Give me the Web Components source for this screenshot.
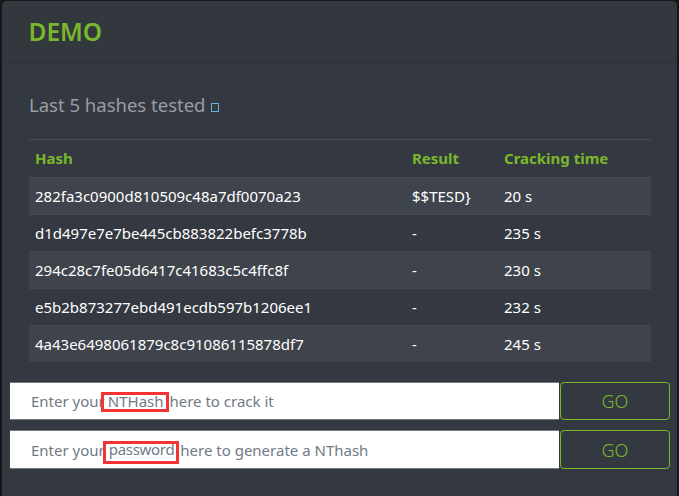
<!DOCTYPE html>
<html><head><meta charset="utf-8">
<style>
html,body{margin:0;padding:0;background:#15171a;height:100%;overflow:hidden}
body{font-family:"Noto Sans","Open Sans",sans-serif}
</style></head><body>
<demo-card>
  <span slot="title">DEMO</span>
  <span slot="sub">Last 5 hashes tested</span>
  <hash-table>
    <hash-row head a="Hash" b="Result" c="Cracking time"></hash-row>
    <hash-row odd a="282fa3c0900d810509c48a7df0070a23" b="$$TESD}" c="20 s"></hash-row>
    <hash-row a="d1d497e7e7be445cb883822befc3778b" b="-" c="235 s"></hash-row>
    <hash-row odd a="294c28c7fe05d6417c41683c5c4ffc8f" b="-" c="230 s"></hash-row>
    <hash-row a="e5b2b873277ebd491ecdb597b1206ee1" b="-" c="232 s"></hash-row>
    <hash-row odd a="4a43e6498061879c8c91086115878df7" b="-" c="245 s"></hash-row>
  </hash-table>
  <go-form slot="forms" pre="Enter your" mark="NTHash" post="here to crack it"></go-form>
  <go-form slot="forms" tall pre="Enter your" mark="password" post="here to generate a NThash"></go-form>
</demo-card>
<script>
const def=(n,html)=>customElements.define(n,class extends HTMLElement{
  connectedCallback(){ if(this.shadowRoot) return; const r=this.attachShadow({mode:'open'});
    r.innerHTML=typeof html==='function'?html(this):html; }
});
def('demo-card',`<style>
:host{display:block;box-sizing:border-box;margin:1px 2px 0;height:495px;background:#343941;border-radius:5px 5px 0 0;color:#fff}
header{height:62px;box-sizing:border-box;border-bottom:1px solid #2c3036;padding:0 26px 0 26.5px;background:#33373e;border-radius:5px 5px 0 0;display:flex;align-items:center;font-size:24.5px;font-weight:600;color:#79b82a}
.sub{padding:27px 27px 0;display:flex;align-items:center;height:28px;font-size:18.5px;color:#999da3;gap:5px}
.box{width:6px;height:7px;border:1px solid #68b0dc;margin-top:6px}
.body{padding:21px 26px 0 27px}
.forms{padding:20px 7px 0 8px;display:flex;flex-direction:column;gap:10px}
</style><header><slot name="title"></slot></header>
<div class="sub"><slot name="sub"></slot><span class="box"></span></div>
<div class="body"><slot></slot></div>
<div class="forms"><slot name="forms"></slot></div>`);
def('hash-table',`<style>:host{display:block;border-top:1px solid #4a4e55}</style><slot></slot>`);
def('hash-row',e=>{const h=e.hasAttribute('head'),o=e.hasAttribute('odd');return `<style>
:host{display:grid;grid-template-columns:377px 92px 1fr;height:37px;box-sizing:border-box;align-items:center;padding-left:6px;
 font-size:15px;${h?'font-weight:700;color:#79b82a;padding-bottom:2px;':'color:#fff;border-top:1px solid #44484f;'}background:${o?'#3f434b':'transparent'}}
</style><span>${e.getAttribute('a')}</span><span>${e.getAttribute('b')}</span><span>${e.getAttribute('c')}</span>`});
def('go-form',e=>{const t=e.hasAttribute('tall');return `<style>
:host{display:flex;height:${t?39:38}px;gap:1px}
.in{width:549px;box-sizing:border-box;background:#fff;border:solid #77797c;border-width:1px 0;padding:0 21px;display:flex;align-items:center;font-size:15px;color:#6f7a86;white-space:pre}
.m{outline:3px solid #f33333;${t
 ?'line-height:11px;padding:0 2px 6px 3px;margin:6px 0 0 1px;letter-spacing:-.3px;'
 :'line-height:12px;padding:0 2px 2px 4px;margin:2px 0 0 -1px;'}}
.go{width:110px;box-sizing:border-box;border:1px solid #79b82a;border-radius:4px;display:flex;align-items:center;justify-content:center;color:#79b82a;font-size:18px;font-weight:300}
</style><div class="in">${e.getAttribute('pre')}<span class="m">${e.getAttribute('mark')}</span> ${e.getAttribute('post')}</div><div class="go">GO</div>`});
</script>
</body></html>
